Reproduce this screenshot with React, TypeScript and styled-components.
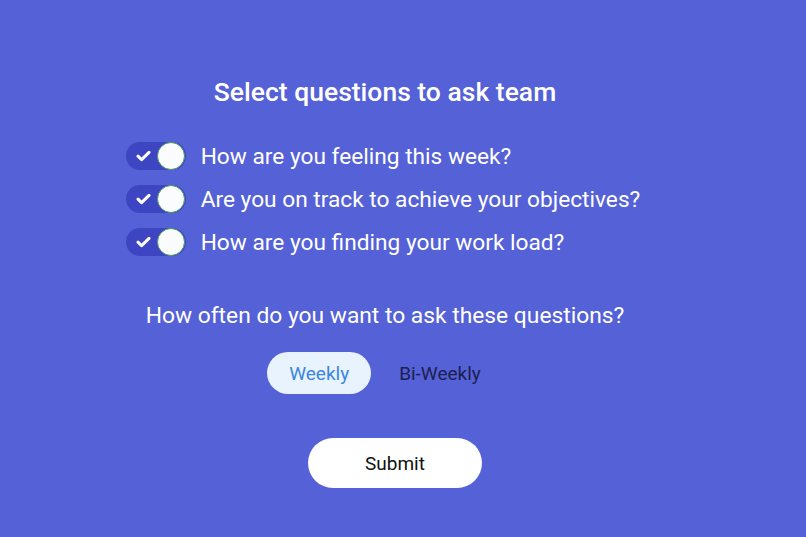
import * as React from 'react';
import styled, { createGlobalStyle } from 'styled-components';

const GlobalStyle = createGlobalStyle`
  html, body {
    margin: 0;
    padding: 0;
    background: #5561d6;
    font-family: Roboto, "Noto Sans", sans-serif;
  }
`;

const Page = styled.main`
  width: 770px;
  height: 537px;
  display: flex;
  flex-direction: column;
  align-items: center;
  padding-top: 76px;
  box-sizing: border-box;
  color: #ffffff;
`;

const Title = styled.h1`
  margin: 0;
  font-size: 26.5px;
  font-weight: 500;
  line-height: 32px;
`;

const QuestionList = styled.ul`
  list-style: none;
  margin: 34px 4px 0 0;
  padding: 0;
  display: flex;
  flex-direction: column;
  gap: 15px;
`;

const QuestionRow = styled.li`
  display: flex;
  align-items: center;
  gap: 15px;
  height: 28px;
  font-size: 22.7px;
`;

const Track = styled.button<{ $on: boolean }>`
  position: relative;
  width: 60px;
  height: 28px;
  border: none;
  border-radius: 14px;
  padding: 0;
  background: ${(p) => (p.$on ? '#3d45c2' : '#8a92e6')};
  cursor: pointer;
  flex-shrink: 0;
`;

const CheckMark = styled.svg`
  position: absolute;
  left: 10px;
  top: 8px;
`;

const Knob = styled.span<{ $on: boolean }>`
  position: absolute;
  top: 0;
  left: ${(p) => (p.$on ? '31px' : '1px')};
  width: 28px;
  height: 28px;
  box-sizing: border-box;
  border-radius: 50%;
  background: #fbfcfd;
  border: 1.5px solid #4c9a5a;
`;

const Prompt = styled.p`
  margin: 46px 0 0;
  font-size: 22.8px;
  line-height: 28px;
`;

const Tabs = styled.div`
  display: flex;
  margin-top: 22px;
  gap: 6px;
`;

const Tab = styled.button<{ $active: boolean }>`
  height: 42px;
  padding: 0 22px;
  border: none;
  border-radius: 21px;
  font-family: inherit;
  font-size: 19px;
  background: ${(p) => (p.$active ? '#e8f3fe' : 'transparent')};
  color: ${(p) => (p.$active ? '#3a86e0' : '#1c2050')};
  cursor: pointer;
`;

const SubmitButton = styled.button`
  margin: 44px 0 0 20px;
  width: 174px;
  height: 50px;
  border: none;
  border-radius: 25px;
  background: #ffffff;
  color: #111111;
  font-family: inherit;
  font-size: 19px;
  cursor: pointer;
`;

const questions = [
  'How are you feeling this week?',
  'Are you on track to achieve your objectives?',
  'How are you finding your work load?',
];

const App: React.FC = () => {
  const [enabled, setEnabled] = React.useState([true, true, true]);
  const [freq, setFreq] = React.useState('Weekly');

  const toggle = (i: number) =>
    setEnabled((prev) => prev.map((v, j) => (j === i ? !v : v)));

  return (
    <>
      <GlobalStyle />
      <Page>
        <Title>Select questions to ask team</Title>
        <QuestionList>
          {questions.map((q, i) => (
            <QuestionRow key={q}>
              <Track $on={enabled[i]} onClick={() => toggle(i)}>
                {enabled[i] && (
                  <CheckMark width="15" height="12" viewBox="0 0 15 12">
                    <path
                      d="M2 6.2 L5.6 9.6 L13 2.4"
                      fill="none"
                      stroke="#ffffff"
                      strokeWidth="3"
                      strokeLinecap="round"
                      strokeLinejoin="round"
                    />
                  </CheckMark>
                )}
                <Knob $on={enabled[i]} />
              </Track>
              {q}
            </QuestionRow>
          ))}
        </QuestionList>
        <Prompt>How often do you want to ask these questions?</Prompt>
        <Tabs>
          {['Weekly', 'Bi-Weekly'].map((f) => (
            <Tab key={f} $active={freq === f} onClick={() => setFreq(f)}>
              {f}
            </Tab>
          ))}
        </Tabs>
        <SubmitButton>Submit</SubmitButton>
      </Page>
    </>
  );
};

export default App;
